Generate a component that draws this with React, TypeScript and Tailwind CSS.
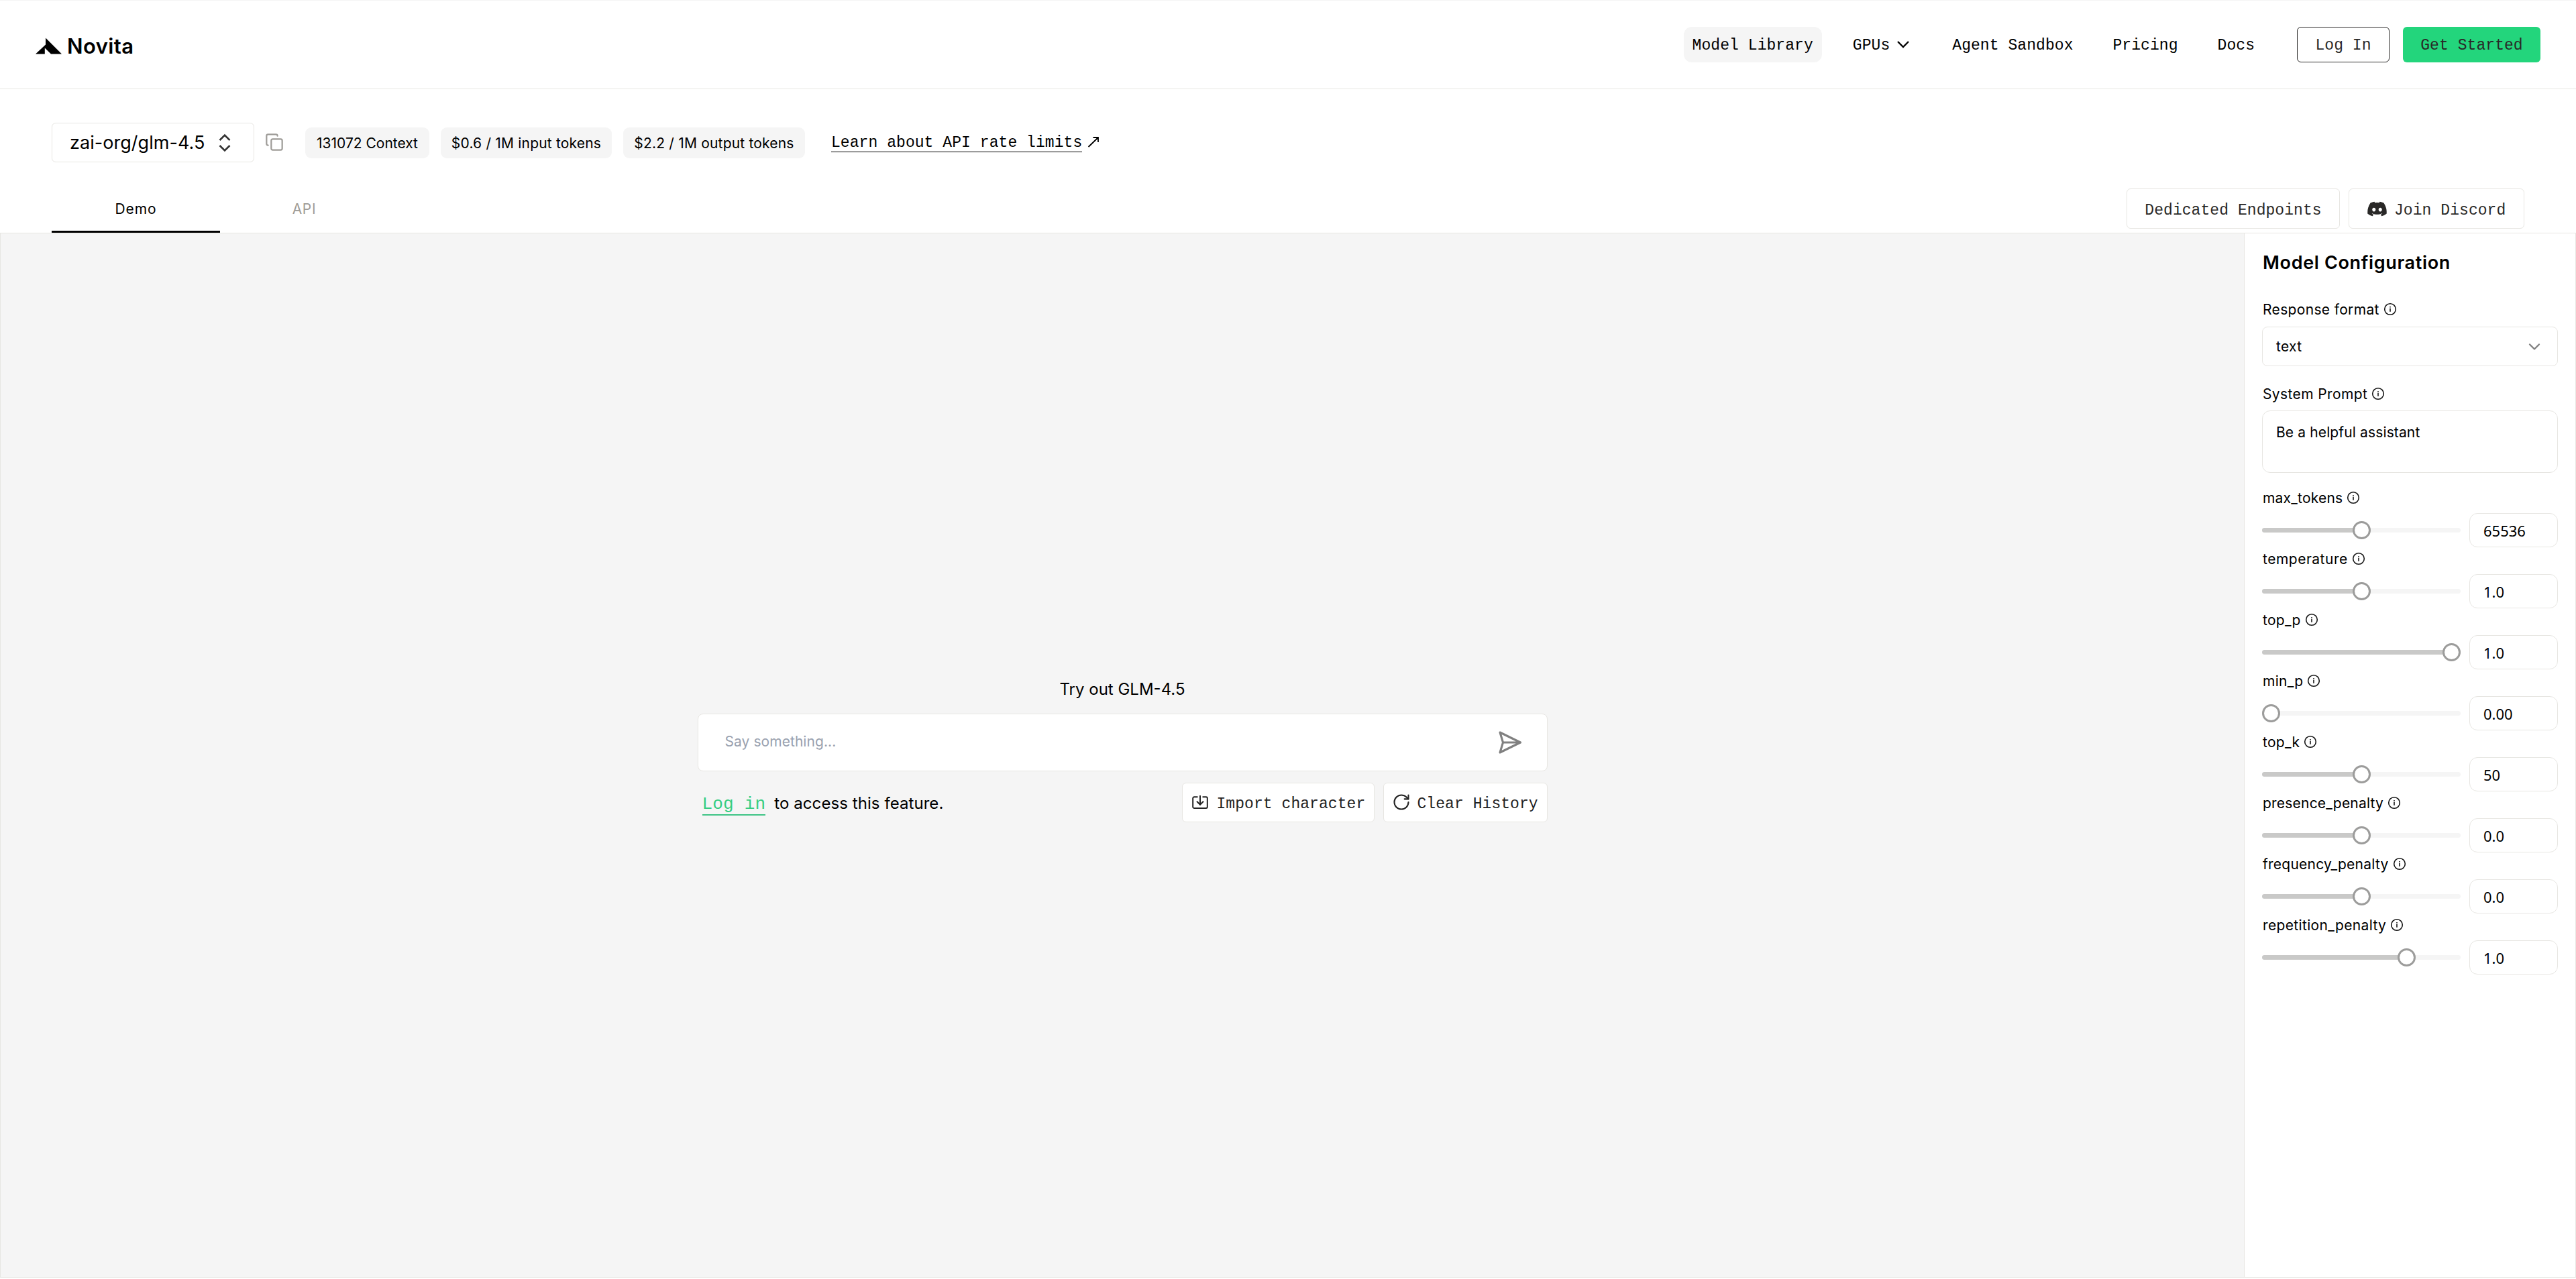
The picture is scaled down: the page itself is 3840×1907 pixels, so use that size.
import { ChevronDown, Copy, RotateCw } from 'lucide-react';
import { FaDiscord } from 'react-icons/fa';

const params = [
    { name: 'max_tokens', value: '65536', percent: 50, track: 'tracking-[0.2px]' },
    { name: 'temperature', value: '1.0', percent: 50, track: 'tracking-[0.5px]' },
    { name: 'top_p', value: '1.0', percent: 100, track: 'tracking-[0.28px]' },
    { name: 'min_p', value: '0.00', percent: 0, track: 'tracking-[0.28px]' },
    { name: 'top_k', value: '50', percent: 50, track: 'tracking-[0.28px]' },
    { name: 'presence_penalty', value: '0.0', percent: 50, track: 'tracking-[0.21px]' },
    { name: 'frequency_penalty', value: '0.0', percent: 50, track: 'tracking-[0.25px]' },
    { name: 'repetition_penalty', value: '1.0', percent: 75, track: 'tracking-[0.35px]' },
];

const mono = "font-['Liberation_Mono',monospace] text-[23px] tracking-[0.06px] whitespace-pre";

function Logo() {
    return (
        <div className="flex items-center">
            <svg width="39" height="25" viewBox="0 0 39 25" className="mt-[3px]">
                <path d="M15 0.5 L39 24.5 H23 L13.8 15.5 V24.5 H0 L15 10.5 Z" fill="#000" />
            </svg>
            <span className="ml-2 mt-1 text-[31px] leading-9 font-semibold tracking-[0.4px]">
                Novita
            </span>
        </div>
    );
}

function InfoIcon() {
    return (
        <svg width="20" height="20" viewBox="0 0 20 20" fill="none" className="-mt-[3px]">
            <circle cx="10" cy="10" r="8.3" stroke="#161616" strokeWidth="1.6" />
            <path d="M10 8.8V13.8M10 5.9V7.6" stroke="#161616" strokeWidth="1.6" />
        </svg>
    );
}

function SendIcon() {
    return (
        <svg width="36" height="36" viewBox="0 0 36 36" fill="none">
            <path
                d="M3 3L33.5 18L3 33L7.5 18ZM7.5 18H33"
                stroke="#808080"
                strokeWidth="3.1"
                strokeLinejoin="round"
                strokeLinecap="round"
            />
        </svg>
    );
}

function ImportIcon() {
    return (
        <svg width="26" height="22" viewBox="0 0 26 22" fill="none" stroke="#232323" strokeWidth="2">
            <path d="M9.5 3.3H4.2A2 2 0 0 0 2.2 5.3V18A2 2 0 0 0 4.2 20H21.8A2 2 0 0 0 23.8 18V5.3A2 2 0 0 0 21.8 3.3H16.5" />
            <path d="M13 1V14.5M8 9.8L13 14.8L18 9.8" />
        </svg>
    );
}

function Label({ text, track }: { text: string; track: string }) {
    return (
        <div className="flex h-8 items-center gap-1.5 pt-[2px] pl-px text-[21px]">
            <span className={track}>{text}</span>
            <InfoIcon />
        </div>
    );
}

function Slider({ percent }: { percent: number }) {
    return (
        <div className="relative flex h-[27px] w-[296px] items-center">
            <div className="h-[7px] w-full overflow-hidden rounded-full bg-[#f5f5f5]">
                <div className="h-full bg-[#c9c9c8]" style={{ width: `${percent}%` }} />
            </div>
            <div className="absolute inset-x-0 pr-[27px]">
                <div
                    className="relative size-[27px] rounded-full border-[3px] border-[#9c9c9b] bg-white"
                    style={{ left: `${percent}%` }}
                />
            </div>
        </div>
    );
}

function Header() {
    return (
        <header className="flex h-[133px] shrink-0 items-center justify-between border-t border-b border-t-[#f5f5f5] border-b-[#e7e6e2] pr-[53px] pl-[53px]">
            <Logo />
            <div className="flex items-center">
                <nav className={`flex items-center gap-[33px] ${mono}`}>
                    <a className="flex h-[53px] items-center rounded-xl bg-[#f5f5f5] px-[13px] pt-[3px]">
                        Model Library
                    </a>
                    <a className="flex h-[53px] items-center pt-[3px] pr-[15px] pl-[13px]">
                        GPUs
                        <svg width="24" height="24" viewBox="0 0 24 24" fill="none" className="ml-2 -mt-1">
                            <path d="M4 8L12 16L20 8" stroke="#000" strokeWidth="2.4" />
                        </svg>
                    </a>
                    <a className="flex h-[53px] items-center px-[13px] pt-[3px]">Agent Sandbox</a>
                    <a className="flex h-[53px] items-center px-[13px] pt-[3px]">Pricing</a>
                    <a className="flex h-[53px] items-center px-[13px] pt-[3px]">Docs</a>
                </nav>
                <button
                    className={`ml-[50px] flex h-[53px] w-[138px] items-center justify-center rounded-md border border-[#292827] pt-[3px] text-[#292827] ${mono}`}
                >
                    Log In
                </button>
                <button
                    className={`ml-5 flex h-[53px] w-[205px] items-center justify-center rounded-md bg-[#23d57c] pt-[3px] text-[#292827] ${mono}`}
                >
                    Get Started
                </button>
            </div>
        </header>
    );
}

function ModelBar() {
    return (
        <section className="flex h-[214px] shrink-0 flex-col justify-between pt-[50px] pr-[77px] pl-[77px]">
            <div className="flex items-center">
                <div className="flex h-[59px] w-[302px] items-center rounded-md border border-[#e7e6e2] pl-[26px]">
                    <span className="pt-0.5 text-[27px] tracking-[0.05px]">zai-org/glm-4.5</span>
                    <svg width="20" height="28" viewBox="0 0 20 28" fill="none" className="ml-5">
                        <path
                            d="M2.5 10L10 2.5L17.5 10M2.5 18L10 25.5L17.5 18"
                            stroke="#333"
                            strokeWidth="2.6"
                        />
                    </svg>
                </div>
                <Copy size={28} strokeWidth={1.9} className="ml-4 -mt-0.5 text-[#9e9c98]" />

                {/* PRICING CHIPS */}
                <div className="ml-8 flex gap-[17px] text-[21px]">
                    <span className="flex h-[46px] w-[185px] items-center justify-center rounded-[9px] bg-[#f5f5f5] pt-0.5 tracking-[-0.01px]">
                        131072 Context
                    </span>
                    <span className="flex h-[46px] w-[255px] items-center justify-center rounded-[9px] bg-[#f5f5f5] pt-0.5 tracking-[0.19px]">
                        $0.6 / 1M input tokens
                    </span>
                    <span className="flex h-[46px] w-[271px] items-center justify-center rounded-[9px] bg-[#f5f5f5] pt-0.5 tracking-[0.19px]">
                        $2.2 / 1M output tokens
                    </span>
                </div>
                <a className={`mt-0.5 ml-[39px] flex h-[26px] items-center border-b border-black leading-none ${mono}`}>
                    Learn about API rate limits
                </a>
                <svg width="18" height="18" viewBox="0 0 18 18" fill="none" className="ml-2 -mt-0.5">
                    <path d="M1.5 16L16 2M8.5 2H16V9" stroke="#000" strokeWidth="1.8" />
                </svg>
            </div>

            <div className="flex items-start justify-between">
                <div className="flex h-[66px] text-[21px]">
                    <div className="flex w-[251px] items-center justify-center border-b-[3px] border-black pb-0.5 tracking-[0.9px]">
                        Demo
                    </div>
                    <div className="flex w-[251px] items-center justify-center pb-[5px] tracking-[0.7px] text-[#9e9c98]">
                        API
                    </div>
                </div>
                <div className={`flex gap-[13px] text-[#292827] ${mono}`}>
                    <button className="flex h-[60px] w-[318px] items-center justify-center rounded-md border border-[#e7e6e2] pt-[6px]">
                        Dedicated Endpoints
                    </button>
                    <button className="flex h-[60px] w-[262px] items-center rounded-md border border-[#e7e6e2] pt-[6px] pl-[26px]">
                        <FaDiscord size={31} className="-mt-1.5" />
                        <span className="ml-[10px]">Join Discord</span>
                    </button>
                </div>
            </div>
        </section>
    );
}

function Chat() {
    return (
        <div className="flex flex-1 flex-col items-center bg-[#f5f5f5] pt-[661px]">
            <h2 className="pt-0.5 text-2xl leading-[34px]">Try out GLM-4.5</h2>
            <div className="mt-[19px] flex h-[86px] w-[1267px] items-center justify-between rounded-lg border border-[#e7e6e2] bg-white pr-[37px] pl-10">
                <span className="pb-[3px] text-[21px] tracking-[0.06px] text-gray-400">Say something...</span>
                <SendIcon />
            </div>
            <div className="mt-[17px] flex w-[1267px] items-start justify-between">
                <div className="flex pt-3 pl-[7px]">
                    <a className="h-[37px] border-b-2 border-[#3fc486] font-['Liberation_Mono',monospace] text-[26px] leading-[40px] tracking-[0.2px] text-[#35cd82]">
                        Log in
                    </a>
                    <span className="ml-[13px] text-2xl leading-[37px] tracking-[0.07px]">
                        to access this feature.
                    </span>
                </div>
                <div className={`flex gap-[13px] text-[#232323] ${mono}`}>
                    <button className="flex h-[59px] w-[287px] items-center rounded-md border border-[#e7e6e2] bg-white pt-[6px] pl-[13px]">
                        <span className="-mt-2">
                            <ImportIcon />
                        </span>
                        <span className="ml-3">Import character</span>
                    </button>
                    <button className="flex h-[59px] w-[245px] items-center rounded-md border border-[#e7e6e2] bg-white pt-[6px] pl-[12px]">
                        <RotateCw size={28} strokeWidth={1.8} className="-mt-2" />
                        <span className="ml-[10px]">Clear History</span>
                    </button>
                </div>
            </div>
        </div>
    );
}

function Sidebar() {
    return (
        <aside className="w-[494px] shrink-0 border-l border-[#e7e6e2] pt-6 pl-[26px]">
            <h1 className="pl-px text-[27px] leading-10 font-semibold tracking-[0.65px]">Model Configuration</h1>

            <div className="mt-[33px]">
                <Label text="Response format" track="tracking-[0.34px]" />
            </div>
            <div className="mt-2.5 flex h-[59px] w-[441px] items-center justify-between rounded-lg border border-[#e7e6e2] pr-5 pl-[20px] text-[21px]">
                <span className="pt-px tracking-[0.33px]">text</span>
                <ChevronDown size={28} strokeWidth={2} className="text-[#808080]" />
            </div>

            <div className="mt-[25px]">
                <Label text="System Prompt" track="tracking-[0.38px]" />
            </div>
            <div className="mt-[9px] h-[93px] w-[441px] rounded-xl border border-[#e7e6e2] pt-4 pl-[20px] text-[21px] leading-8 tracking-[0.13px]">
                Be a helpful assistant
            </div>

            <div className="mt-[21px]">
                {params.map((param) => (
                    <div key={param.name} className="h-[91px]">
                        <Label text={param.name} track={param.track} />
                        <div className="mt-[7px] flex w-[441px] items-center justify-between">
                            <Slider percent={param.percent} />
                            <div className="flex h-[51px] w-[132px] items-center rounded-xl border border-[#e7e6e2] pt-0.5 pl-5 font-['Noto_Sans',sans-serif] text-[22px]">
                                {param.value}
                            </div>
                        </div>
                    </div>
                ))}
            </div>
        </aside>
    );
}

export default function App() {
    return (
        <div className="flex h-[1907px] w-full flex-col overflow-hidden bg-white font-['Inter',sans-serif] text-black">
            <Header />
            <ModelBar />
            <main className="flex h-[1558px] shrink-0 border border-[#e7e6e2]">
                <Chat />
                <Sidebar />
            </main>
        </div>
    );
}
